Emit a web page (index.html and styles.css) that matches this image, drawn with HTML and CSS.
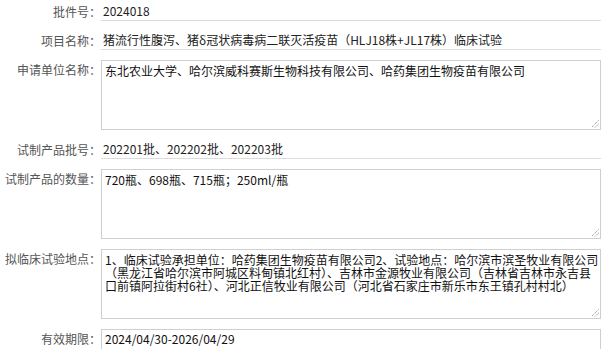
FILE: index.html
```html
<!DOCTYPE html>
<html lang="zh-CN">
<head>
<meta charset="utf-8">
<title>临床试验批件</title>
<link rel="stylesheet" href="styles.css">
</head>
<body>
<div class="form">
  <div class="row">
    <div class="label">批件号：</div>
    <div class="field">2024018</div>
  </div>
  <div class="row">
    <div class="label">项目名称：</div>
    <div class="field">猪流行性腹泻、猪δ冠状病毒病二联灭活疫苗（HLJ18株+JL17株）临床试验</div>
  </div>
  <div class="row">
    <div class="label">申请单位名称：</div>
    <div class="area-wrap">
      <textarea class="area" readonly>东北农业大学、哈尔滨威科赛斯生物科技有限公司、哈药集团生物疫苗有限公司</textarea>
      <svg class="grip" width="9" height="9" viewBox="0 0 9 9"><path d="M8.5 1.5 L1.5 8.5 M8.5 5 L5 8.5" stroke="#777" stroke-width="1" stroke-dasharray="1 1" fill="none"/></svg>
    </div>
  </div>
  <div class="row">
    <div class="label">试制产品批号：</div>
    <div class="field">202201批、202202批、202203批</div>
  </div>
  <div class="row">
    <div class="label">试制产品的数量：</div>
    <div class="area-wrap">
      <textarea class="area" readonly>720瓶、698瓶、715瓶；250ml/瓶</textarea>
      <svg class="grip" width="9" height="9" viewBox="0 0 9 9"><path d="M8.5 1.5 L1.5 8.5 M8.5 5 L5 8.5" stroke="#777" stroke-width="1" stroke-dasharray="1 1" fill="none"/></svg>
    </div>
  </div>
  <div class="row">
    <div class="label">拟临床试验地点：</div>
    <div class="area-wrap">
      <textarea class="area" readonly>1、临床试验承担单位：哈药集团生物疫苗有限公司2、试验地点：哈尔滨市滨圣牧业有限公司（黑龙江省哈尔滨市阿城区料甸镇北红村）、吉林市金源牧业有限公司（吉林省吉林市永吉县口前镇阿拉街村6社）、河北正信牧业有限公司（河北省石家庄市新乐市东王镇孔村村北）</textarea>
      <svg class="grip" width="9" height="9" viewBox="0 0 9 9"><path d="M8.5 1.5 L1.5 8.5 M8.5 5 L5 8.5" stroke="#777" stroke-width="1" stroke-dasharray="1 1" fill="none"/></svg>
    </div>
  </div>
  <div class="row">
    <div class="label">有效期限：</div>
    <div class="box">2024/04/30-2026/04/29</div>
  </div>
</div>
</body>
</html>
```
FILE: styles.css
```css
html, body {
  margin: 0;
  padding: 0;
  background: #ffffff;
}
body {
  font-family: "Noto Sans CJK SC", "Noto Sans", sans-serif;
  font-size: 12px;
  color: #222;
}
.form {
  padding-top: 2px;
  width: 614px;
}
.row {
  display: flex;
  align-items: flex-start;
  margin-bottom: 10px;
}
.label {
  flex: none;
  width: 101px;
  text-align: right;
  color: #555;
  line-height: 19px;
  white-space: nowrap;
}
.field {
  flex: none;
  box-sizing: border-box;
  width: 500px;
  height: 19px;
  line-height: 18px;
  padding-left: 2px;
  border-bottom: 1px solid #dcdcdc;
  color: #222;
  white-space: nowrap;
  overflow: hidden;
}
.area-wrap {
  flex: none;
  position: relative;
  width: 500px;
  height: 70px;
}
.area {
  display: block;
  box-sizing: border-box;
  width: 500px;
  height: 70px;
  margin: 0;
  border: 1px solid #cfcfcf;
  padding: 3px 0 0 3px;
  font-family: "Noto Sans CJK SC", "Noto Sans", sans-serif;
  font-size: 12px;
  line-height: 13px;
  color: #111;
  background: #fff;
  outline: none;
  resize: none;
}
.grip {
  position: absolute;
  right: 2px;
  bottom: 2px;
  display: block;
}
.box {
  flex: none;
  box-sizing: border-box;
  width: 500px;
  height: 24px;
  border: 1px solid #cfcfcf;
  padding: 2px 0 0 3px;
  line-height: 14px;
  color: #111;
}
```
